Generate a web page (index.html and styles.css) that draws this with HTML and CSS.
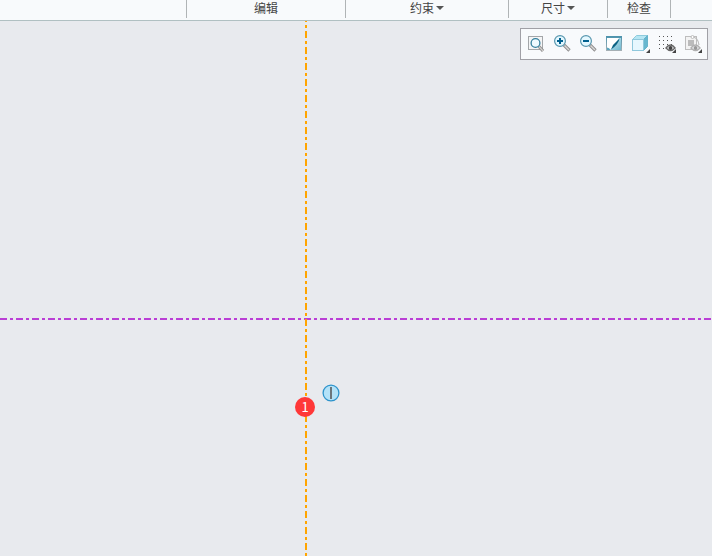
FILE: index.html
```html
<!DOCTYPE html>
<html lang="zh-CN">
<head>
    <meta charset="utf-8">
    <title>草绘</title>
    <link rel="stylesheet" href="styles.css">
</head>
<body>
    <header class="ribbon">
        <div class="group group-first"></div>
        <div class="group group-edit">编辑</div>
        <div class="group group-constrain"><button class="menu" type="button">约束<span class="arrow"></span></button></div>
        <div class="group group-dimension"><button class="menu" type="button">尺寸<span class="arrow"></span></button></div>
        <div class="group group-inspect">检查</div>
    </header>

    <main class="canvas">
        <svg class="axes" aria-hidden="true">
            <line class="axis axis-h" x1="0" y1="298" x2="100%" y2="298"/>
            <line class="axis axis-v" x1="306" y1="0" x2="306" y2="100%"/>
        </svg>

        <div class="toolbar" role="toolbar" aria-label="视图">
            <button class="tool" type="button" aria-label="重新调整">
                <svg viewBox="0 0 18 18">
                    <rect x="1.5" y="1.5" width="14" height="13" fill="#f4f5f6" stroke="#a3a6a9"/>
                    <path d="M12 11.5l4 4.5" stroke="#8c8c8c" stroke-width="3"/>
                    <path d="M12 11.5l4 4.5" stroke="#d2d0ce" stroke-width="1.2"/>
                    <circle cx="8.5" cy="8" r="4.4" fill="#eefaff" stroke="#337f9d" stroke-width="1.3"/>
                </svg>
            </button>
            <button class="tool" type="button" aria-label="放大">
                <svg viewBox="0 0 18 18">
                    <path d="M11 10l5.5 5.5" stroke="#8c8c8c" stroke-width="3.2"/>
                    <path d="M11.5 10.5l4.5 4.5" stroke="#dad8d6" stroke-width="1.4"/>
                    <circle cx="7" cy="6" r="5.4" fill="#e4f8ff" stroke="#5796ae" stroke-width="1.2"/>
                    <path d="M4 6h6M7 3v6" stroke="#00608f" stroke-width="2"/>
                </svg>
            </button>
            <button class="tool" type="button" aria-label="缩小">
                <svg viewBox="0 0 18 18">
                    <path d="M11 10l5.5 5.5" stroke="#8c8c8c" stroke-width="3.2"/>
                    <path d="M11.5 10.5l4.5 4.5" stroke="#dad8d6" stroke-width="1.4"/>
                    <circle cx="7" cy="6" r="5.4" fill="#e4f8ff" stroke="#5796ae" stroke-width="1.2"/>
                    <path d="M4 6h6" stroke="#00608f" stroke-width="2"/>
                </svg>
            </button>
            <button class="tool" type="button" aria-label="重画">
                <svg viewBox="0 0 18 18">
                    <defs>
                        <linearGradient id="frame" x1="0" y1="0" x2="0" y2="1">
                            <stop offset="0" stop-color="#4a93ad"/>
                            <stop offset="1" stop-color="#a9b1b5"/>
                        </linearGradient>
                        <linearGradient id="sky" x1="0" y1="0" x2="1" y2="1">
                            <stop offset="0" stop-color="#d9f1f8"/>
                            <stop offset="1" stop-color="#6db7cf"/>
                        </linearGradient>
                    </defs>
                    <rect x="1" y="1" width="16" height="15" fill="url(#frame)"/>
                    <rect x="2" y="3" width="14" height="12" fill="url(#sky)"/>
                    <path d="M2 3h12l-5 8l-4 4h-3z" fill="#fff"/>
                    <path d="M2 12.5q2.5 0 3.500 2.500h-3.500z" fill="#5ba6bf"/>
                    <path d="M14.500 3.500q-1 6-8.500 11l2-4.500z" fill="#0c6283"/>
                </svg>
            </button>
            <button class="tool" type="button" aria-label="显示样式">
                <svg viewBox="0 0 18 18">
                    <path d="M1.500 4.500l4-4h11l-4 4z" fill="#b6e6f3" stroke="#8dcbdd"/>
                    <path d="M12.500 4.500l4-4v11l-4 4z" fill="#66b7cf" stroke="#66b3cb"/>
                    <rect x="1.500" y="4.500" width="11" height="11" fill="#e6f7fe" stroke="#8fc8dc"/>
                    <path d="M19 14v4h-4z" fill="#444"/>
                </svg>
            </button>
            <button class="tool" type="button" aria-label="草绘器显示过滤器">
                <svg viewBox="0 0 18 18">
                    <path d="M2 1.500h14M2 5.500h14M2 9.500h14M2 13.500h7" stroke="#555" stroke-dasharray="1 3"/>
                    <path d="M9 13q4.500-6 9 0q-4.500 5-9 0z" fill="#f8fafc" stroke="#666" stroke-width="1.4"/>
                    <circle cx="13.500" cy="13" r="2" fill="#444"/>
                    <path d="M19 14v4h-4z" fill="#444"/>
                </svg>
            </button>
            <button class="tool" type="button" aria-label="基准显示过滤器" disabled>
                <svg viewBox="0 0 18 18">
                    <rect x="2.500" y="1.500" width="11" height="13" fill="#f3f3f3" stroke="#bdbdbd"/>
                    <path d="M5 5h6v6h-6z" fill="#bbb"/>
                    <path d="M9 2q6 0 7 8" stroke="#bdbdbd" stroke-width="1.2"/>
                    <circle cx="9.500" cy="2" r="1.500" fill="#fff" stroke="#bdbdbd"/>
                    <path d="M8 13q4.500-6 9 0q-4.500 5-9 0z" fill="#f8fafc" stroke="#b0b0b0" stroke-width="1.4"/>
                    <circle cx="12.500" cy="13" r="2" fill="#999"/>
                    <path d="M19 14v4h-4z" fill="#444"/>
                </svg>
            </button>
        </div>

        <div class="step">1</div>
        <svg class="vertical-mark" viewBox="0 0 18 18" role="img" aria-label="竖直">
            <circle cx="9" cy="9" r="7.900" fill="#b3e2f8" stroke="#2d93cb" stroke-width="1.3"/>
            <path d="M9 3v12" stroke="#6b757b" stroke-width="2"/>
        </svg>
    </main>
</body>
</html>
```
FILE: styles.css
```css
body {
    display: flex;
    flex-direction: column;
    min-height: 100vh;
    margin: 0;
    background: #e8eaee;
    color: #444;
    font: 12px/16px "Noto Sans CJK SC", sans-serif;
}

.ribbon {
    display: flex;
    height: 20px;
    background: #f8fafc;
    border-bottom: 1px solid #b0c0c2;
}
.group {
    box-sizing: border-box;
    height: 18px;
    border-right: 1px solid #b0b4b6;
    text-align: center;
}
.group-first {width: 187px;}
.group-edit {width: 159px;}
.group-constrain {width: 163px;}
.group-dimension {width: 99px;}
.group-inspect {width: 63px;}

.menu {
    display: inline-flex;
    align-items: center;
    gap: 2px;
    padding: 0;
    border: 0;
    background: none;
    color: inherit;
    font: inherit;
}
.arrow {
    border: 4px solid transparent;
    border-top-color: #555;
    border-bottom: 0;
}

.canvas {
    position: relative;
    flex: 1;
    overflow: hidden;
}
.axes {
    position: absolute;
    width: 100%;
    height: 100%;
}
.axis {
    stroke-width: 2;
    stroke-dasharray: 7 3 3 3;
}
.axis-h {stroke: #ba3fd5;}
.axis-v {
    stroke: #ffa500;
    stroke-dashoffset: 6;
}

/* floating view toolbar */
.toolbar {
    position: absolute;
    top: 7px;
    right: 4px;
    display: flex;
    gap: 8px;
    padding: 6px;
    border: 1px solid #a0a0a6;
    background: #f8fafc;
}
.tool {
    width: 18px;
    height: 18px;
    padding: 0;
    border: 0;
    background: none;
}
.tool svg {
    display: block;
    overflow: visible;
    fill: none;
}

.step {
    position: absolute;
    left: 295px;
    top: 376px;
    width: 20px;
    height: 20px;
    border-radius: 50%;
    background: #ff3838;
    color: #fff;
    font: 13px/20px "Noto Sans CJK SC", sans-serif;
    text-align: center;
}
.vertical-mark {
    position: absolute;
    left: 322px;
    top: 363px;
    width: 18px;
    height: 18px;
}
```
